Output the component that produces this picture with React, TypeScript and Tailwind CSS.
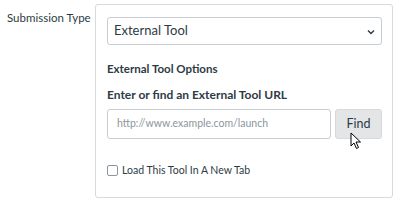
export default function App() {
  return (
    <div className="w-[400px] h-[204px] bg-white relative text-[#2d3b45]" style={{ fontFamily: 'Lato, "Liberation Sans", sans-serif' }}>
      <div className="flex pt-[4px]">
        <div className="w-[95px] pl-[7px] pt-[7px] text-[11.5px] leading-[14px] whitespace-nowrap">Submission Type</div>
        <div className="w-[298px] h-[194px] border border-[#d7dadd] rounded-[3px] pl-[11px] pr-[10px] pt-[12px]">
          <div className="h-[28px] border border-[#c7cdd1] rounded-[3px] flex items-center justify-between pl-[6px] pr-[6px] text-[13px]">
            <span>External Tool</span>
            <svg width="8" height="6" viewBox="0 0 8 6" className="mt-[1px]">
              <path d="M1 1.5 L4 4.5 L7 1.5" fill="none" stroke="#2d3b45" strokeWidth="1.4" />
            </svg>
          </div>
          <div className="mt-[14px] text-[11.5px] font-bold leading-[20px]">External Tool Options</div>
          <div className="mt-[6px] text-[12px] font-bold leading-[20px]">Enter or find an External Tool URL</div>
          <div className="mt-[4px] flex gap-[4px]">
            <div className="w-[224px] h-[30px] border border-[#c7cdd1] rounded-[3px] flex items-center pl-[9px] text-[10.5px] text-[#8b969e]">
              http://www.example.com/launch
            </div>
            <div className="w-[47px] h-[30px] bg-[#e3e5e7] border border-[#d7dadd] rounded-[3px] flex items-center justify-center text-[12.5px]">
              Find
            </div>
          </div>
          <div className="mt-[24px] flex items-center gap-[4px]">
            <div className="w-[11px] h-[11px] border border-[#8b969e] rounded-[2px]" />
            <span className="text-[10.5px] leading-[14px]">Load This Tool In A New Tab</span>
          </div>
        </div>
      </div>
      <svg className="absolute left-[350px] top-[132px]" width="12" height="18" viewBox="0 0 12 18">
        <path d="M1 1 L1 14 L4 11 L6.5 16.5 L8.5 15.5 L6 10 L10.5 10 Z" fill="#fff" stroke="#000" strokeWidth="1" strokeLinejoin="round" />
      </svg>
    </div>
  )
}
